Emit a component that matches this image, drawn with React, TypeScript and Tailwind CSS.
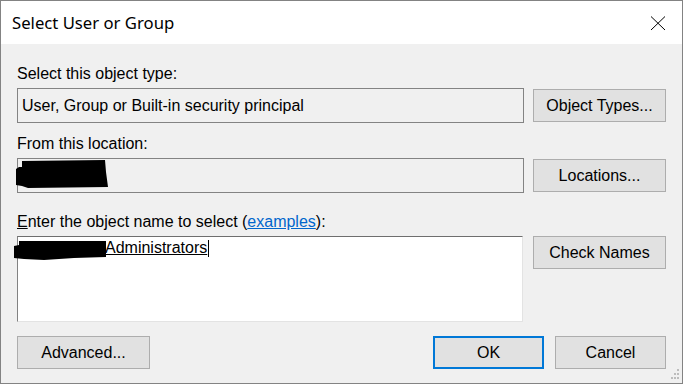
const ui = { fontFamily: '"Liberation Sans", Arial, sans-serif' };
const title = { fontFamily: '"Noto Sans", "Open Sans", sans-serif' };

function Button({ label, className = "" }: { label: string; className?: string }) {
  return (
    <div
      className={
        "flex h-[33px] items-center justify-center border border-[#adadad] bg-[#e1e1e1] text-[16px] leading-[18px] text-black " +
        className
      }
    >
      {label}
    </div>
  );
}

function Redaction({ d, w, h, className }: { d: string; w: number; h: number; className: string }) {
  return (
    <svg width={w} height={h} viewBox={`0 0 ${w} ${h}`} className={"absolute " + className}>
      <path d={d} fill="#000" />
    </svg>
  );
}

export default function App() {
  return (
    <div className="h-[384px] w-[684px] bg-white" style={ui}>
      <div className="relative flex h-[384px] w-[683px] flex-col border border-[#838383] bg-[#f0f0f0]">
        <div className="flex h-[43px] shrink-0 items-center justify-between bg-white pl-[11px] pr-[16px]">
          <span className="text-[16.7px] leading-[20px] text-black" style={title}>
            Select User or Group
          </span>
          <svg width="16" height="16" viewBox="0 0 16 16">
            <path d="M1 1.5 L15 15 M15 1.5 L1 15" stroke="#000" strokeWidth="1" fill="none" />
          </svg>
        </div>

        <div className="flex flex-1 flex-col pl-[16px] pr-[16px] pt-[21px]">
          <div className="h-[18px] text-[16px] leading-[18px] text-black">Select this object type:</div>
          <div className="mt-[5px] grid grid-cols-[507px_1fr] gap-x-[9px]">
            <div className="flex h-[35px] items-center border border-[#838383] pl-[4px] text-[16px] leading-[18px] text-black">
              User, Group or Built-in security principal
            </div>
            <div className="flex items-center">
              <Button label="Object Types..." className="w-full" />
            </div>
          </div>

          <div className="mt-[12px] h-[18px] text-[16px] leading-[18px] text-black">From this location:</div>
          <div className="mt-[5px] grid grid-cols-[507px_1fr] gap-x-[9px]">
            <div className="relative h-[35px] border border-[#838383]">
              <Redaction
                w={92}
                h={28}
                className="left-[-2px] top-[1px]"
                d="M6 1 L89 0 L90 12 L92 27 L12 28 L6 26 L0 25 L0 9 L3 7 L6 7 Z"
              />
            </div>
            <div className="flex items-center">
              <Button label="Locations..." className="w-full" />
            </div>
          </div>

          <div className="mt-[20px] h-[18px] text-[16px] leading-[18px] text-black">
            <span className="underline">E</span>nter the object name to select (
            <span className="text-[#0066cc] underline">examples</span>):
          </div>
          <div className="mt-[5px] grid grid-cols-[506px_1fr] gap-x-[10px]">
            <div className="relative h-[86px] border-b border-l border-r border-t border-b-[#e3e3e3] border-l-[#828282] border-r-[#e3e3e3] border-t-[#6e6e6e] bg-white">
              <div className="flex items-center pl-[87px] pt-[2px] text-[16px] leading-[18px] text-black">
                <span className="underline">Administrators</span>
                <span className="ml-[1px] h-[17px] w-[1px] bg-black" />
              </div>
              <Redaction
                w={93}
                h={20}
                className="left-[-4px] top-[4px]"
                d="M5 0 L92 0 L92 16 L60 17 L30 19 L10 18 L0 17 L0 5 L5 4 Z"
              />
            </div>
            <div>
              <Button label="Check Names" className="w-full" />
            </div>
          </div>

          <div className="mt-[14px] flex items-center">
            <Button label="Advanced..." className="w-[133px]" />
            <div className="flex-1" />
            <div className="flex h-[33px] w-[111px] items-center justify-center border-2 border-[#0078d7] bg-[#e1e1e1] text-[16px] leading-[18px] text-black">
              OK
            </div>
            <Button label="Cancel" className="ml-[11px] w-[111px]" />
          </div>
        </div>

        <svg width="12" height="12" viewBox="0 0 12 12" className="absolute bottom-[2px] right-[2px]">
          <g fill="#bcbcbc">
            <rect x="9" y="0" width="2" height="2" />
            <rect x="6" y="4" width="2" height="2" />
            <rect x="9" y="4" width="2" height="2" />
            <rect x="3" y="8" width="2" height="2" />
            <rect x="6" y="8" width="2" height="2" />
            <rect x="9" y="8" width="2" height="2" />
          </g>
        </svg>
      </div>
    </div>
  );
}
